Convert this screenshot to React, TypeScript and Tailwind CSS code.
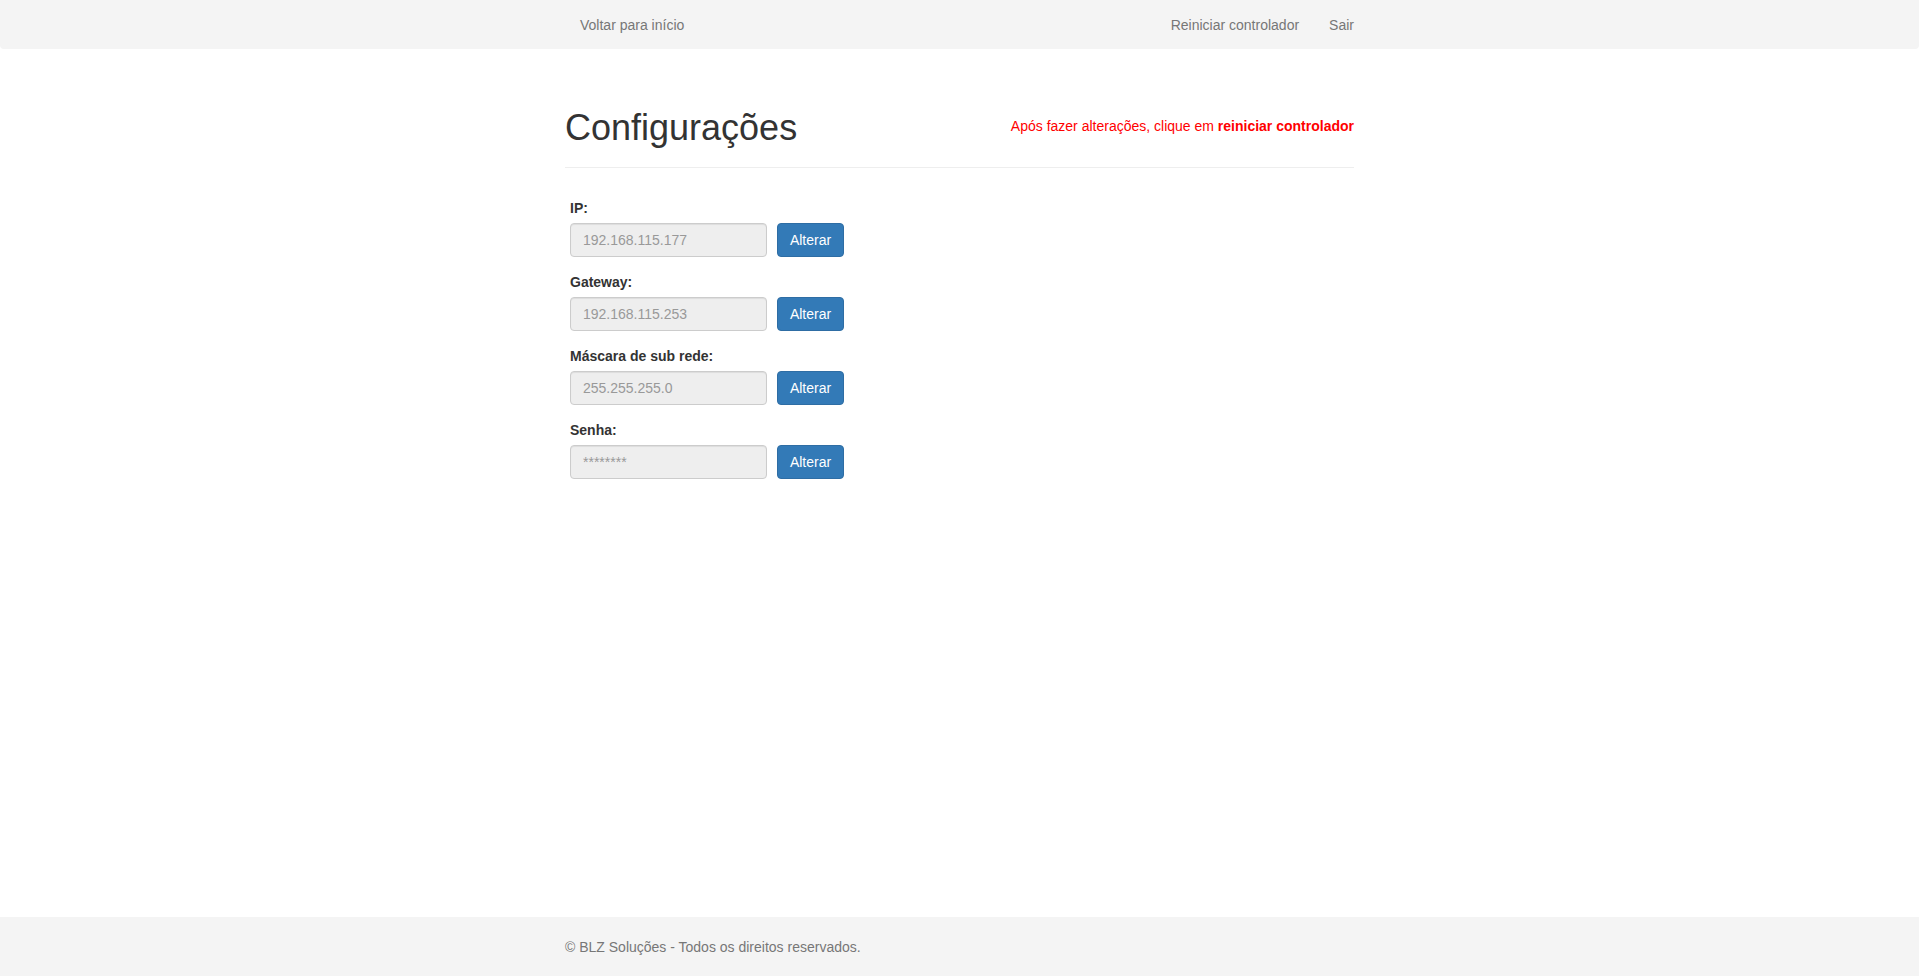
import React from 'react';

const fields = [
  { label: 'IP:', value: '192.168.115.177' },
  { label: 'Gateway:', value: '192.168.115.253' },
  { label: 'Máscara de sub rede:', value: '255.255.255.0' },
  { label: 'Senha:', value: '********' },
];

const App: React.FC = () => {
  return (
    <div
      className="flex min-h-screen flex-col bg-white text-[14px] text-[#333]"
      style={{ fontFamily: '"Liberation Sans", Arial, Helvetica, sans-serif' }}
    >
      <nav className="h-[49px] rounded-b-[4px] bg-[#f4f4f4]">
        <div className="mx-auto flex w-[789px] items-start justify-between">
          <a className="pl-[15px] pt-[15px] leading-[20px] text-[#777]">
            Voltar para início
          </a>
          <div className="flex gap-[30px] pt-[15px] leading-[20px] text-[#777]">
            <a>Reiniciar controlador</a>
            <a>Sair</a>
          </div>
        </div>
      </nav>

      <main className="mx-auto w-[789px]">
        <div className="mt-[59px] flex items-start justify-between border-b border-[#eee] pb-[19px]">
          <h1 className="text-[36px] leading-[40px] text-[#333]">Configurações</h1>
          <p className="mt-[8px] leading-[20px] text-[#ff0000]">
            Após fazer alterações, clique em <b>reiniciar controlador</b>
          </p>
        </div>

        <form className="mt-[30px] pl-[5px]">
          {fields.map((f) => (
            <div key={f.label} className="mb-[15px]">
              <label className="mb-[5px] block font-bold leading-[20px]">{f.label}</label>
              <div className="flex gap-[10px]">
                <input
                  disabled
                  placeholder={f.value}
                  className="h-[34px] w-[197px] rounded-[4px] border border-[#ccc] bg-[#eee] px-[12px] text-[14px] text-[#999] shadow-[inset_0_1px_1px_rgba(0,0,0,0.075)] placeholder:text-[#999]"
                />
                <button
                  type="button"
                  className="h-[34px] w-[67px] rounded-[4px] border border-[#2e6da4] bg-[#337ab7] text-[14px] text-white"
                >
                  Alterar
                </button>
              </div>
            </div>
          ))}
        </form>
      </main>

      <footer className="mt-auto h-[59px] bg-[#f4f4f4]">
        <div className="mx-auto w-[789px] pt-[20px] leading-[20px] text-[#777]">
          © BLZ Soluções - Todos os direitos reservados.
        </div>
      </footer>
    </div>
  );
};

export default App;
